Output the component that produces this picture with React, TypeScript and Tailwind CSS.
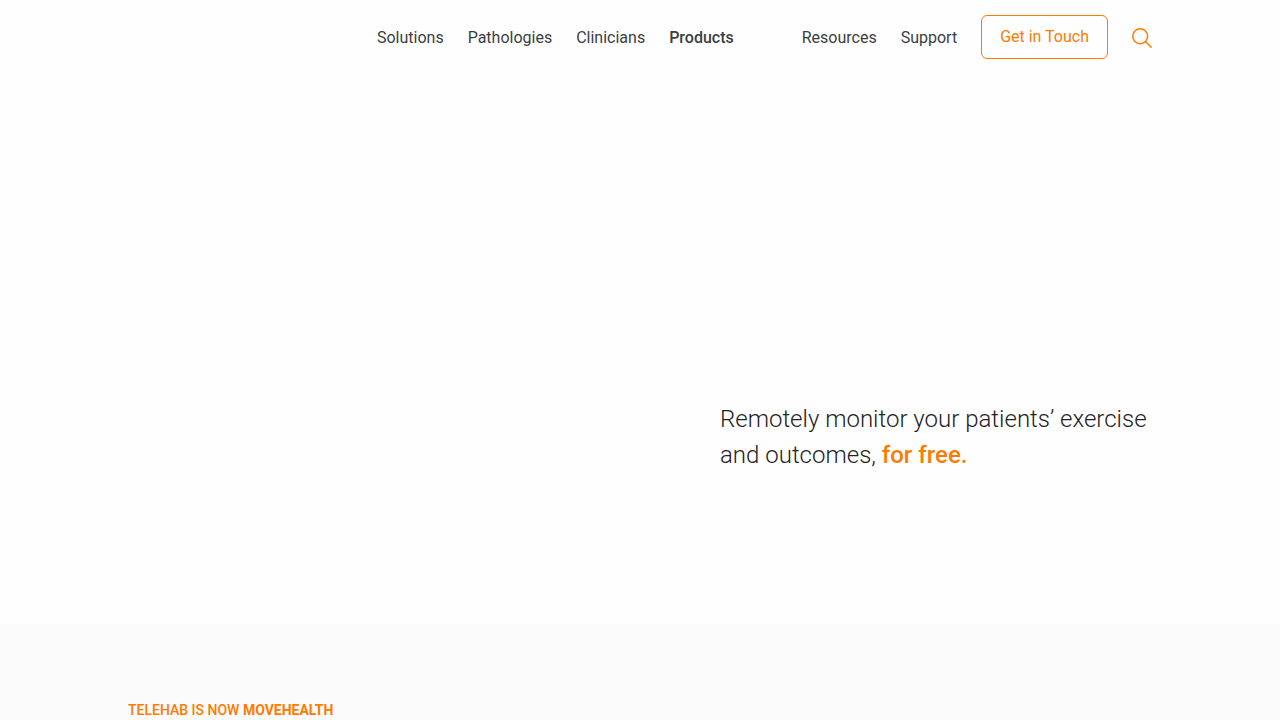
const leftLinks = ["Solutions", "Pathologies", "Clinicians"];
const rightLinks = ["Resources", "Support"];

function NavLink({ label }: { label: string }) {
  return (
    <a href="#" className="hover:text-[#ff7a00]">
      {label}
    </a>
  );
}

function SearchIcon() {
  return (
    <svg viewBox="0 0 20 20" className="size-5" fill="none" stroke="currentColor" strokeWidth="1.5" aria-hidden="true">
      <circle cx="8.2" cy="8.2" r="7.45" />
      <path d="M13.5 13.5 19.6 19.6" />
    </svg>
  );
}

function Header() {
  return (
    <header className="flex items-center justify-end px-[10%] pt-[15px] pb-[14px] text-base text-[#3a3f42]">
      <nav className="flex items-center gap-6">
        {leftLinks.map((label) => (
          <NavLink key={label} label={label} />
        ))}
        <a href="#" aria-current="page" className="mr-11 font-medium">
          Products
        </a>
        {rightLinks.map((label) => (
          <NavLink key={label} label={label} />
        ))}
        <a
          href="#"
          className="mb-0.5 rounded-md border border-[#ff7a00] px-[18px] py-[9px] text-[#ff7a00]"
        >
          Get in Touch
        </a>
        <button type="button" aria-label="Search" className="text-[#ff7a00]">
          <SearchIcon />
        </button>
      </nav>
    </header>
  );
}

export default function App() {
  return (
    <div className="min-h-screen bg-[#fefefe] font-[Roboto,sans-serif]">
      <Header />
      <main>
        <section className="grid grid-cols-2 px-[10%] pt-[326px] pb-[151px]">
          <p className="col-start-2 pl-20 text-2xl leading-9 font-light text-[#1f2224]">
            Remotely monitor your patients’ exercise and outcomes,{" "}
            <strong className="font-medium text-[#ff7a00]">for free.</strong>
          </p>
        </section>
        <section className="bg-[#fafafa] px-[10%] pt-19">
          <h2 className="text-sm font-medium text-[#ff7a00] uppercase">
            Telehab is now <strong className="font-bold">MoveHealth</strong>
          </h2>
        </section>
      </main>
    </div>
  );
}
